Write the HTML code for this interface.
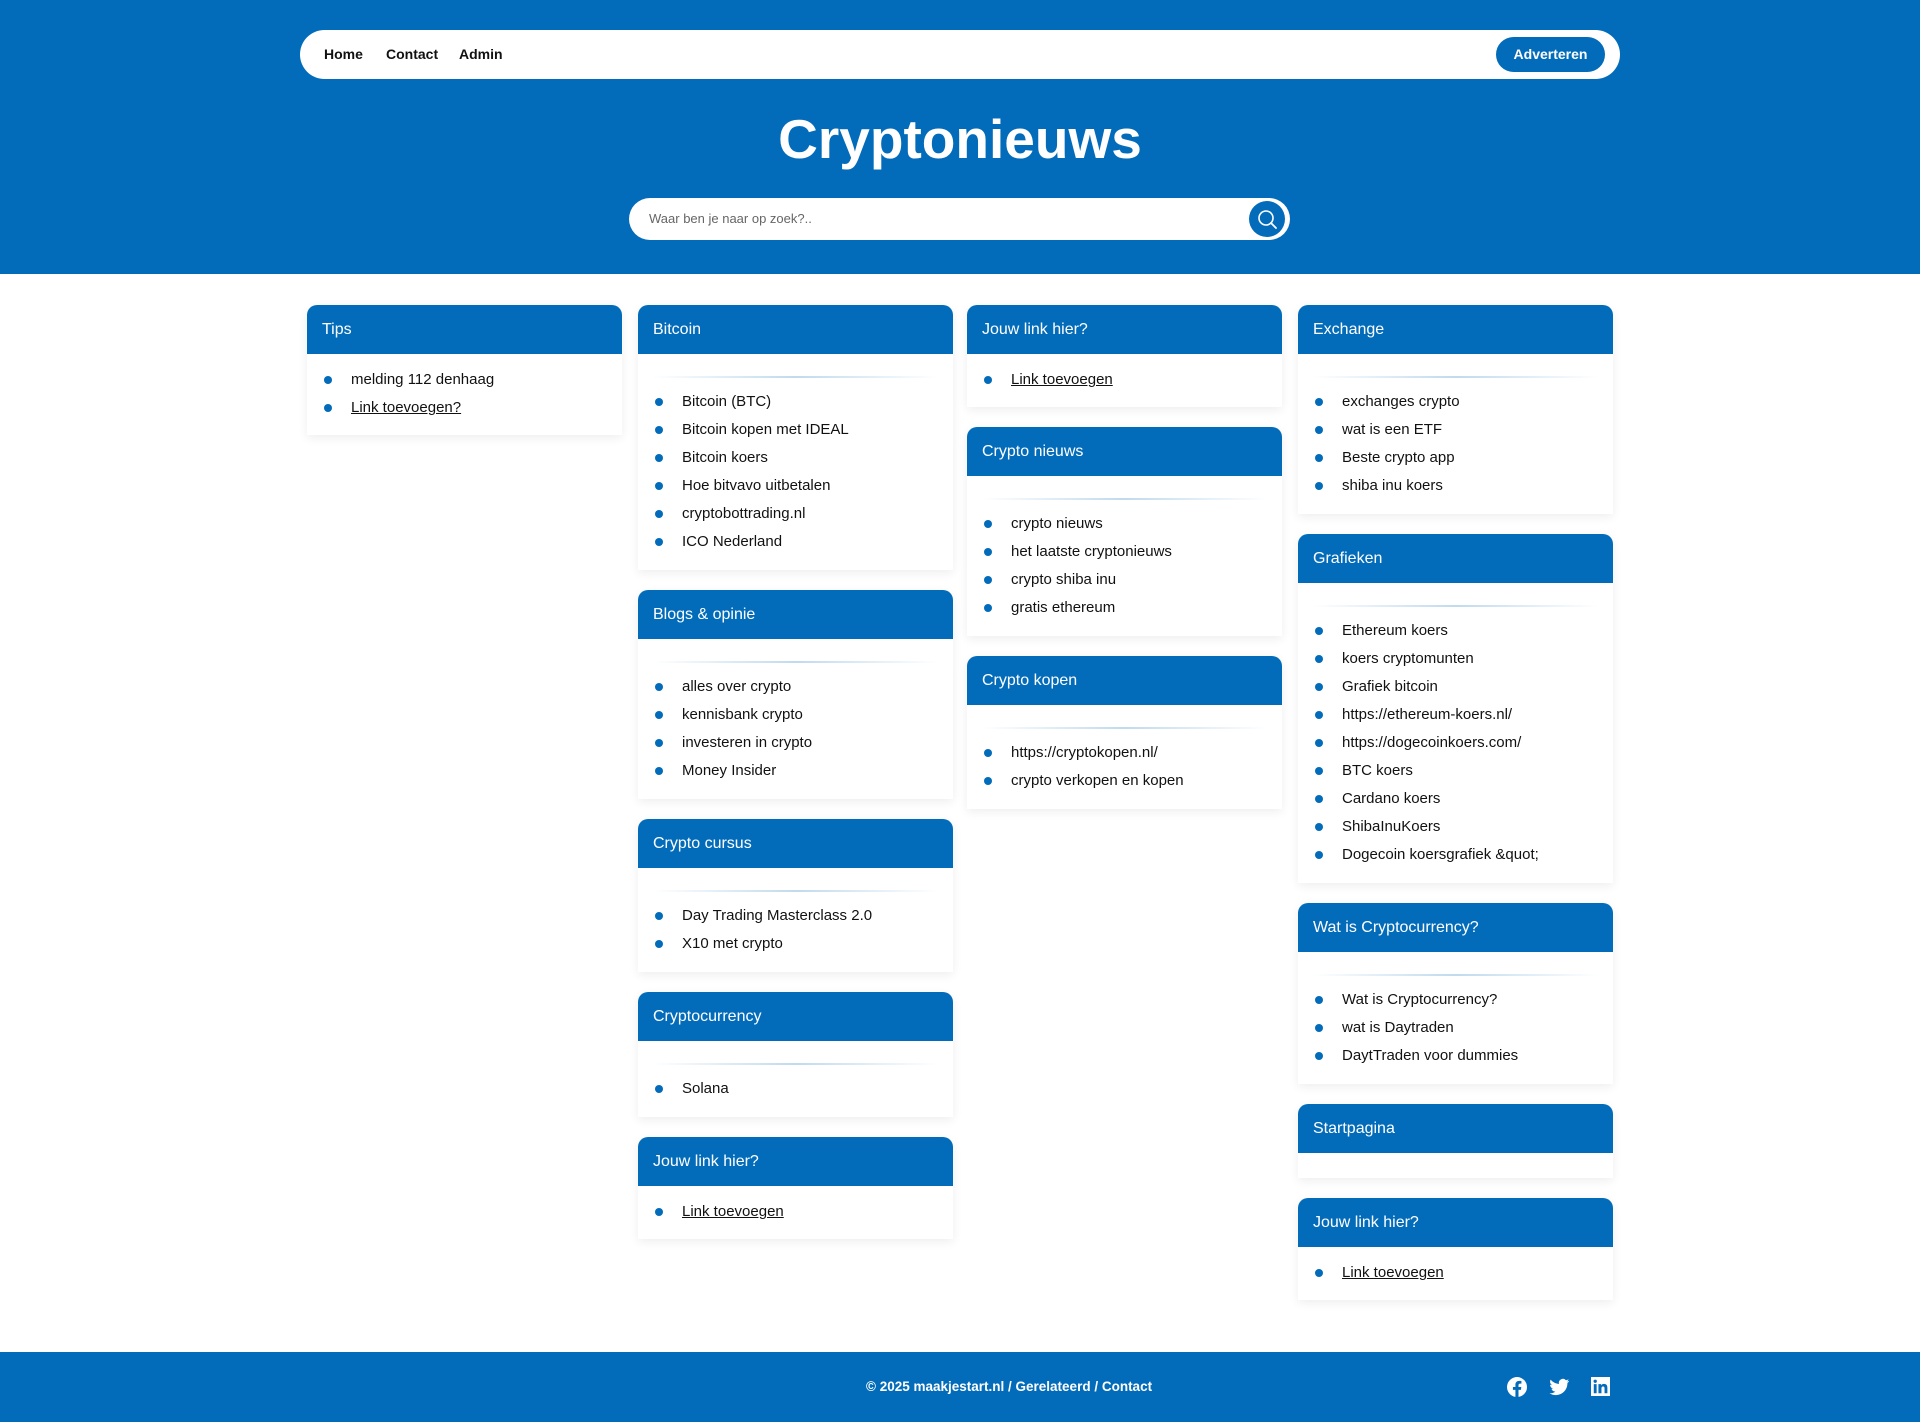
<!DOCTYPE html>
<html><head><meta charset="utf-8">
<style>
*{margin:0;padding:0;box-sizing:border-box}
html,body{width:1920px;height:1422px;overflow:hidden;background:#fff;font-family:"Liberation Sans",Arial,sans-serif;color:#111}
.hdr{position:absolute;left:0;top:0;width:1920px;height:274px;background:#036cba}
.nav{position:absolute;left:300px;top:30px;width:1320px;height:49px;background:#fff;border-radius:25px}
.nav a{position:absolute;top:16px;font-size:14px;font-weight:bold;color:#111;text-decoration:none}
.btn{position:absolute;left:1196px;top:7px;width:109px;height:35px;background:#036cba;border-radius:18px;color:#fff;font-size:14px;font-weight:bold;text-align:center;line-height:35px}
h1{position:absolute;left:0;width:1920px;top:104px;text-align:center;color:#fff;font-size:55px;font-weight:bold;line-height:70px}
.search{position:absolute;left:629px;top:198px;width:661px;height:42px;background:#fff;border-radius:21px}
.search span{position:absolute;left:20px;top:13px;font-size:13px;color:#666}
.sbtn{position:absolute;right:5px;top:3px;width:36px;height:36px;border-radius:50%;background:#036cba}
.col{position:absolute;top:305px;width:315px}
.card{background:#fff;border-radius:10px 10px 0 0;box-shadow:0 3px 10px rgba(0,0,0,.07);margin-bottom:20px}
.card h3{height:49px;background:#036cba;color:#fff;font-size:16px;font-weight:normal;line-height:49px;padding-left:15px;border-radius:10px 10px 0 0}
.card ul{list-style:none;padding:12px 0 13px}
.card.d ul{padding-top:0;padding-bottom:14px}
.card li{position:relative;height:28px;line-height:28px;padding-left:44px;font-size:15px;color:#111}
.card li:before{content:"";position:absolute;left:17px;top:10px;width:8px;height:8px;border-radius:50%;background:#036cba}
.card li u{text-decoration:underline}
.dv{height:2px;margin:22px 15px 10px;background:linear-gradient(90deg,rgba(3,108,186,0),rgba(3,108,186,.25) 50%,rgba(3,108,186,0))}
.empty{height:25px}
.ftr{position:absolute;left:0;top:1352px;width:1920px;height:70px;background:#036cba}
.ftr .t{position:absolute;left:866px;top:27px;color:#fff;font-size:13.5px;font-weight:bold}
.ftr svg{position:absolute;top:25px}
</style></head><body>
<div class="hdr">
 <div class="nav">
  <a style="left:24px">Home</a><a style="left:86px">Contact</a><a style="left:159px">Admin</a>
  <div class="btn">Adverteren</div>
 </div>
 <h1>Cryptonieuws</h1>
 <div class="search"><span>Waar ben je naar op zoek?..</span>
  <div class="sbtn"><svg width="36" height="36" viewBox="0 0 36 36"><circle cx="17" cy="17" r="7" fill="none" stroke="#fff" stroke-width="1.6"/><path d="M22 22l5 5" stroke="#fff" stroke-width="1.8" stroke-linecap="round"/></svg></div>
 </div>
</div>

<div class="col" style="left:307px">
 <div class="card"><h3>Tips</h3><ul><li>melding 112 denhaag</li><li><u>Link toevoegen?</u></li></ul></div>
</div>

<div class="col" style="left:638px">
 <div class="card d"><h3>Bitcoin</h3><div class="dv"></div><ul><li>Bitcoin (BTC)</li><li>Bitcoin kopen met IDEAL</li><li>Bitcoin koers</li><li>Hoe bitvavo uitbetalen</li><li>cryptobottrading.nl</li><li>ICO Nederland</li></ul></div>
 <div class="card d"><h3>Blogs &amp; opinie</h3><div class="dv"></div><ul><li>alles over crypto</li><li>kennisbank crypto</li><li>investeren in crypto</li><li>Money Insider</li></ul></div>
 <div class="card d"><h3>Crypto cursus</h3><div class="dv"></div><ul><li>Day Trading Masterclass 2.0</li><li>X10 met crypto</li></ul></div>
 <div class="card d"><h3>Cryptocurrency</h3><div class="dv"></div><ul><li>Solana</li></ul></div>
 <div class="card"><h3>Jouw link hier?</h3><ul><li><u>Link toevoegen</u></li></ul></div>
</div>

<div class="col" style="left:967px">
 <div class="card"><h3>Jouw link hier?</h3><ul><li><u>Link toevoegen</u></li></ul></div>
 <div class="card d"><h3>Crypto nieuws</h3><div class="dv"></div><ul><li>crypto nieuws</li><li>het laatste cryptonieuws</li><li>crypto shiba inu</li><li>gratis ethereum</li></ul></div>
 <div class="card d"><h3>Crypto kopen</h3><div class="dv"></div><ul><li>https://cryptokopen.nl/</li><li>crypto verkopen en kopen</li></ul></div>
</div>

<div class="col" style="left:1298px">
 <div class="card d"><h3>Exchange</h3><div class="dv"></div><ul><li>exchanges crypto</li><li>wat is een ETF</li><li>Beste crypto app</li><li>shiba inu koers</li></ul></div>
 <div class="card d"><h3>Grafieken</h3><div class="dv"></div><ul><li>Ethereum koers</li><li>koers cryptomunten</li><li>Grafiek bitcoin</li><li>https://ethereum-koers.nl/</li><li>https://dogecoinkoers.com/</li><li>BTC koers</li><li>Cardano koers</li><li>ShibaInuKoers</li><li>Dogecoin koersgrafiek &amp;quot;</li></ul></div>
 <div class="card d"><h3>Wat is Cryptocurrency?</h3><div class="dv"></div><ul><li>Wat is Cryptocurrency?</li><li>wat is Daytraden</li><li>DaytTraden voor dummies</li></ul></div>
 <div class="card"><h3>Startpagina</h3><div class="empty"></div></div>
 <div class="card"><h3>Jouw link hier?</h3><ul><li><u>Link toevoegen</u></li></ul></div>
</div>

<div class="ftr">
 <div class="t">© 2025 maakjestart.nl / Gerelateerd / Contact</div>
 <svg style="left:1507px" width="20" height="20" viewBox="0 0 24 24"><path fill="#fff" d="M24 12a12 12 0 1 0-13.9 11.9v-8.4H7.1V12h3V9.4c0-3 1.8-4.7 4.5-4.7 1.3 0 2.7.2 2.7.2v3h-1.5c-1.5 0-2 .9-2 1.9V12h3.4l-.5 3.5h-2.9v8.4A12 12 0 0 0 24 12z"/></svg>
 <svg style="left:1549px" width="21" height="20" viewBox="0 0 24 24"><path fill="#fff" d="M23.6 4.6c-.9.4-1.8.6-2.8.8 1-.6 1.8-1.6 2.1-2.7-.9.6-2 1-3.1 1.2a4.9 4.9 0 0 0-8.4 4.5C7.4 8.1 3.8 6.2 1.4 3.2a4.9 4.9 0 0 0 1.5 6.6c-.8 0-1.6-.3-2.2-.6 0 2.4 1.7 4.4 3.9 4.8-.7.2-1.5.2-2.2.1.6 2 2.4 3.4 4.6 3.4A9.9 9.9 0 0 1 0 19.5 14 14 0 0 0 7.5 21.7c9.1 0 14-7.5 14-14v-.6c1-.7 1.8-1.6 2.1-2.5z"/></svg>
 <svg style="left:1591px" width="19" height="19" viewBox="0 0 24 24"><path fill="#fff" d="M0 0h24v24H0z"/><path fill="#036cba" d="M3.5 9h3.6v11.5H3.5zM5.3 3.3a2.1 2.1 0 1 1 0 4.2 2.1 2.1 0 0 1 0-4.2zM9.4 9h3.4v1.6c.5-.9 1.7-1.9 3.5-1.9 3.7 0 4.4 2.4 4.4 5.6v6.2h-3.6v-5.5c0-1.3 0-3-1.8-3s-2.1 1.4-2.1 2.9v5.6H9.4z"/></svg>
</div>
</body></html>
